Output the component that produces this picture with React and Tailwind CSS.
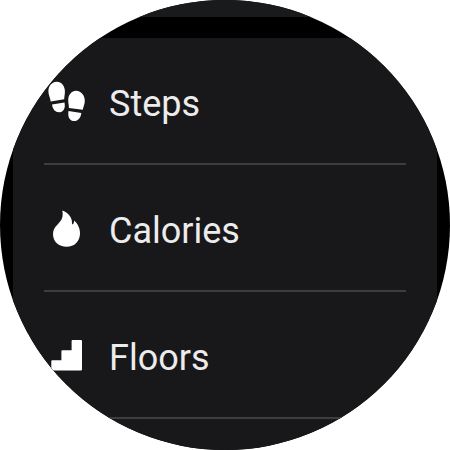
function StepsIcon() {
  return (
    <svg viewBox="0 0 44 45" className="h-[45px] w-11 shrink-0" fill="currentColor" aria-hidden="true">
      <path d="M12.4 3.8C7.4 4.2 4.4 8.4 4.4 13.4C4.5 17.2 6.3 19.8 6.7 23.4L20.2 21.3C20.3 18.4 21 16 20.9 13C20.6 7.8 17.3 3.5 12.4 3.8Z" />
      <path d="M8 26.6L20.5 24.5C21.6 29.8 19.8 33.7 15.8 34.3C11.7 34.8 8.7 31.8 8 26.6Z" />
      <path d="M32.3 12.7C27.6 12.6 24.4 16.8 24.2 21.7C24.1 24.7 25 27.1 24.9 30L38.8 31.8C39.2 28.8 40.7 26.5 40.8 23.2C41 17.6 37.3 12.9 32.3 12.7Z" />
      <path d="M24.5 33L37.3 35C36.8 40.2 33.6 43.5 29.3 43C25.3 42.5 23.6 38.6 24.5 33Z" />
    </svg>
  );
}

function CaloriesIcon() {
  return (
    <svg viewBox="0 0 44 45" className="h-[45px] w-11 shrink-0" fill="currentColor" aria-hidden="true">
      <path d="M18.3 5.6C24.8 8 28.6 13 28 19.5C29.4 19.3 30.2 17.8 30 15.6C33.8 18.6 36 23.4 36 28.2C36 36.3 30.4 41.8 22.6 41.8C14.8 41.8 9 36.6 9 29C9 25 10.8 22 13.6 19.4C18 15.5 19.5 11.5 18.3 5.6Z" />
    </svg>
  );
}

function FloorsIcon() {
  return (
    <svg viewBox="0 0 44 45" className="h-[45px] w-11 shrink-0" fill="currentColor" aria-hidden="true">
      <path d="M28.6 8H37Q38 8 38 9V37.6Q38 38.6 37 38.6H8.3Q7.3 38.6 7.3 37.6V29.2Q7.3 28.2 8.3 28.2H17.4V19.2Q17.4 18.2 18.4 18.2H27.6V9Q27.6 8 28.6 8Z" />
    </svg>
  );
}

const metrics = [
  { label: "Steps", Icon: StepsIcon },
  { label: "Calories", Icon: CaloriesIcon },
  { label: "Floors", Icon: FloorsIcon },
];

export default function App() {
  return (
    <main className="bg-white font-['Roboto',sans-serif]">
      <div className="aspect-square w-full overflow-hidden rounded-full bg-black">
        <div className="h-[17px] bg-[#191a1b]" />
        <ul className="mx-[13px] mt-[21px] bg-[#18181a] px-[31px] pb-8">
          {metrics.map(({ label, Icon }) => (
            <li
              key={label}
              className="flex items-center gap-[21px] border-b-2 border-[#3d3d3f] py-9 text-white"
            >
              <Icon />
              <span className="pt-2 text-4xl leading-[45px] text-[#ececec]">{label}</span>
            </li>
          ))}
        </ul>
      </div>
    </main>
  );
}
